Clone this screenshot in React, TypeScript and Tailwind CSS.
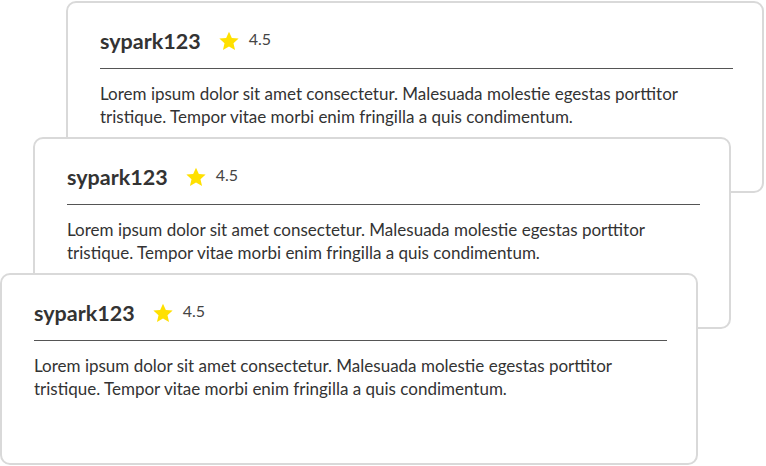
const reviews = [
  { id: 1, indent: "ml-[66px] mt-px" },
  { id: 2, indent: "ml-[33px] -mt-[56px]" },
  { id: 3, indent: "ml-0 -mt-[56px]" },
];

function Star() {
  return (
    <svg viewBox="0 0 24 24" className="h-[22px] w-[22px]">
      <path
        d="M12 1.8l3.1 6.9 7.4.7-5.6 5 1.7 7.4L12 17.9l-6.6 3.9 1.7-7.4-5.6-5 7.4-.7z"
        fill="#FFE000"
      />
    </svg>
  );
}

function ReviewCard({ indent }: { indent: string }) {
  return (
    <div
      className={`${indent} relative h-[192px] w-[698px] rounded-[10px] border-2 border-[#d9d9d9] bg-white pl-[32px] pr-[29px] pt-[22px]`}
    >
      <div className="flex items-center border-b border-[#555] pb-[11px]">
        <span className="text-[21.5px] font-bold text-[#333]">sypark123</span>
        <span className="ml-[17px]">
          <Star />
        </span>
        <span className="ml-[9px] -mt-[5px] text-[16px] text-[#444]">4.5</span>
      </div>
      <p className="mt-[13px] text-[17px] leading-[23px] text-[#333]">
        Lorem ipsum dolor sit amet consectetur. Malesuada molestie egestas porttitor
        <br />
        tristique. Tempor vitae morbi enim fringilla a quis condimentum.
      </p>
    </div>
  );
}

export default function App() {
  return (
    <div className="flex h-[466px] w-[766px] flex-col bg-white font-['Lato','Noto_Sans',sans-serif]">
      {reviews.map((r) => (
        <ReviewCard key={r.id} indent={r.indent} />
      ))}
    </div>
  );
}
